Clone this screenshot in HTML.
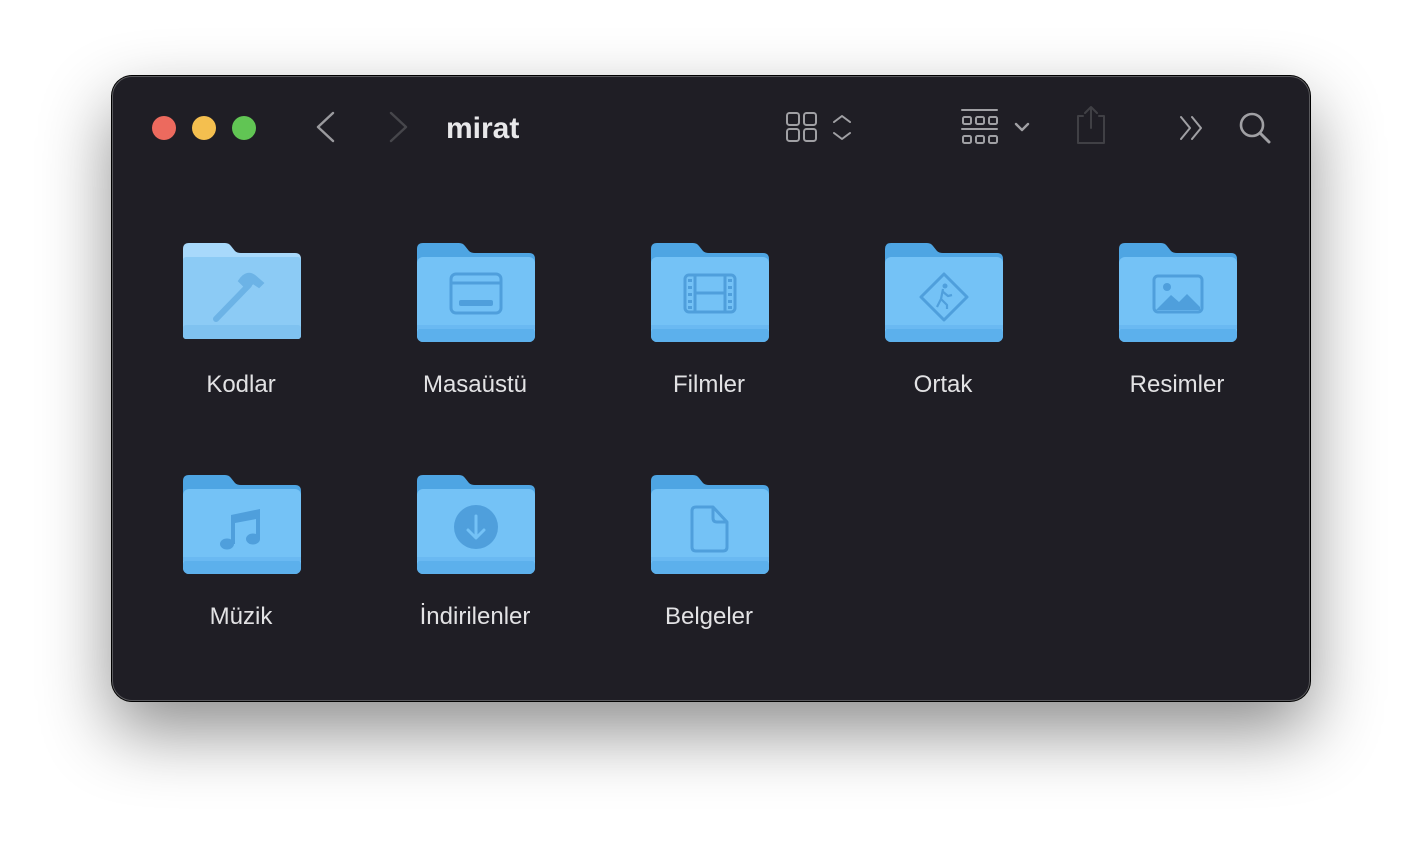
<!DOCTYPE html>
<html><head><meta charset="utf-8"><style>
html,body{margin:0;padding:0;width:1422px;height:850px;background:#fff;overflow:hidden;font-family:"Liberation Sans",sans-serif}
.win{position:absolute;left:112px;top:76px;width:1196px;height:623px;background:#1f1e25;border-radius:20px;border:1px solid #5a5a5e;box-shadow:0 30px 70px rgba(0,0,0,.45),0 0 0 1px #000}
.dot{position:absolute;top:116px;width:24px;height:24px;border-radius:50%}
.lbl{position:absolute;width:200px;text-align:center;color:#e2e2e4;font-size:24px;}
.f{position:absolute;width:118px;height:100px}
</style></head><body>
<div class="win"></div>
<div class="dot" style="left:152px;background:#ec6a5e"></div>
<div class="dot" style="left:192px;background:#f4bf4f"></div>
<div class="dot" style="left:232px;background:#61c554"></div>
<svg style="position:absolute;left:0;top:0" width="1422" height="850" fill="none" stroke-linecap="round" stroke-linejoin="round">
<path d="M333 113 L318 127 L333 141" stroke="#9a9a9e" stroke-width="2.4"/>
<path d="M391 113 L406 127 L391 141" stroke="#46464b" stroke-width="2.4"/>
<g stroke="#a0a0a4" stroke-width="2">
<rect x="787" y="113" width="12" height="12" rx="2.5"/><rect x="804" y="113" width="12" height="12" rx="2.5"/>
<rect x="787" y="129" width="12" height="12" rx="2.5"/><rect x="804" y="129" width="12" height="12" rx="2.5"/>
<path d="M834 122 L842 116 L850 122 M834 133 L842 139 L850 133"/>
<path d="M962 110 H997 M962 129 H997"/>
<rect x="963" y="117" width="8" height="7" rx="1.5"/><rect x="976" y="117" width="8" height="7" rx="1.5"/><rect x="989" y="117" width="8" height="7" rx="1.5"/>
<rect x="963" y="136" width="8" height="7" rx="1.5"/><rect x="976" y="136" width="8" height="7" rx="1.5"/><rect x="989" y="136" width="8" height="7" rx="1.5"/>
<path d="M1016 124 L1022 130 L1028 124" stroke-width="2.4"/>
<path d="M1181 117 L1190 128 L1181 139 M1192 117 L1201 128 L1192 139"/>
<circle cx="1252" cy="125" r="11" stroke-width="2.6"/><path d="M1260 133 L1269 142" stroke-width="3"/>
</g>
<g stroke="#404045" stroke-width="2">
<path d="M1083 116 H1078 V143 H1104 V116 H1099 M1091 128 V108 M1085 113 L1091 107 L1097 113"/>
</g>
<text x="446" y="138" fill="#e8e8ea" font-size="30" font-weight="bold" font-family="Liberation Sans,sans-serif" stroke="none">mirat</text>
</svg>

<svg width="0" height="0" style="position:absolute"><defs>
<g id="fold">
<path d="M6 0 H42 Q46 0 48 3 L52 8 Q54 10 58 10 H112 Q118 10 118 16 V60 H0 V6 Q0 0 6 0Z" fill="#4ea5e3"/>
<rect x="0" y="14" width="118" height="85" rx="6" fill="#74c2f6"/>
<rect x="0" y="84" width="118" height="15" rx="6" fill="#5cb0ec"/>
<rect x="0" y="82" width="118" height="4" fill="#6ab9f2"/>
</g>
</defs></svg>

<svg class="f" style="left:183px;top:243px" viewBox="0 0 118 100">
<path d="M6 0 H42 Q46 0 48 3 L52 8 Q54 10 58 10 H112 Q118 10 118 16 V60 H0 V6 Q0 0 6 0Z" fill="#a8d9fb"/>
<rect x="0" y="14" width="118" height="82" rx="3" fill="#8ccbf5"/>
<rect x="0" y="82" width="118" height="14" rx="3" fill="#7fc2f0"/>
<g stroke="#6cb3e6" stroke-linecap="round" fill="none"><path d="M33 76 L66 42" stroke-width="6"/><path d="M56 38 Q64 26 73 34 L80 40 L76 44 L70 40 L64 46 Z" fill="#6cb3e6" stroke-width="2"/></g>
</svg>
<svg class="f" style="left:417px;top:243px" viewBox="0 0 118 100"><use href="#fold"/>
<g stroke="#4f9fdc" stroke-width="3" fill="none"><rect x="34" y="31" width="50" height="39" rx="5"/><path d="M34 40 H84"/></g><rect x="42" y="57" width="34" height="6" rx="2" fill="#4f9fdc"/></svg>
<svg class="f" style="left:651px;top:243px" viewBox="0 0 118 100"><use href="#fold"/>
<g stroke="#4f9fdc" stroke-width="3" fill="none"><rect x="34" y="32" width="50" height="37" rx="4"/><path d="M44 32 V69 M74 32 V69 M44 50 H74"/></g>
<g fill="#4f9fdc"><rect x="37" y="36" width="4" height="3"/><rect x="37" y="43" width="4" height="3"/><rect x="37" y="50" width="4" height="3"/><rect x="37" y="57" width="4" height="3"/><rect x="37" y="63" width="4" height="3"/><rect x="77" y="36" width="4" height="3"/><rect x="77" y="43" width="4" height="3"/><rect x="77" y="50" width="4" height="3"/><rect x="77" y="57" width="4" height="3"/><rect x="77" y="63" width="4" height="3"/></g></svg>
<svg class="f" style="left:885px;top:243px" viewBox="0 0 118 100"><use href="#fold"/>
<g stroke="#4f9fdc" stroke-width="3" fill="none" stroke-linejoin="round"><path d="M59 31 L82 54 L59 77 L36 54 Z"/><path d="M58 46 L56 56 L52 64 M56 56 L62 62 L62 66 M57 48 L63 53 L67 52" stroke-width="2.2"/></g><circle cx="60" cy="43" r="2.5" fill="#4f9fdc"/></svg>
<svg class="f" style="left:1119px;top:243px" viewBox="0 0 118 100"><use href="#fold"/>
<g stroke="#4f9fdc" stroke-width="3" fill="none"><rect x="35" y="33" width="48" height="36" rx="4"/></g>
<path d="M37 67 L52 52 L60 59 L68 51 L81 64 V67 Z" fill="#4f9fdc"/><circle cx="48" cy="44" r="4" fill="#4f9fdc"/></svg>
<svg class="f" style="left:183px;top:475px" viewBox="0 0 118 100"><use href="#fold"/>
<g fill="#4f9fdc"><ellipse cx="44" cy="69" rx="7" ry="5.5"/><ellipse cx="70" cy="64" rx="7" ry="5.5"/><path d="M48 69 V40 L77 34 V64 H73 V44 L52 48 V69Z"/></g></svg>
<svg class="f" style="left:417px;top:475px" viewBox="0 0 118 100"><use href="#fold"/>
<circle cx="59" cy="52" r="22" fill="#4f9fdc"/><path d="M59 41 V62 M51 55 L59 63 L67 55" stroke="#74c2f6" stroke-width="3" fill="none" stroke-linecap="round" stroke-linejoin="round"/></svg>
<svg class="f" style="left:651px;top:475px" viewBox="0 0 118 100"><use href="#fold"/>
<g stroke="#4f9fdc" stroke-width="3" fill="none" stroke-linejoin="round"><path d="M45 32 H62 L76 47 V72 Q76 76 72 76 H45 Q41 76 41 72 V36 Q41 32 45 32Z"/><path d="M62 32 V43 Q62 47 66 47 H76"/></g></svg>

<div class="lbl" style="left:141px;top:371px">Kodlar</div>
<div class="lbl" style="left:375px;top:371px">Masaüstü</div>
<div class="lbl" style="left:609px;top:371px">Filmler</div>
<div class="lbl" style="left:843px;top:371px">Ortak</div>
<div class="lbl" style="left:1077px;top:371px">Resimler</div>
<div class="lbl" style="left:141px;top:603px">Müzik</div>
<div class="lbl" style="left:375px;top:603px">İndirilenler</div>
<div class="lbl" style="left:609px;top:603px">Belgeler</div>
</body></html>
